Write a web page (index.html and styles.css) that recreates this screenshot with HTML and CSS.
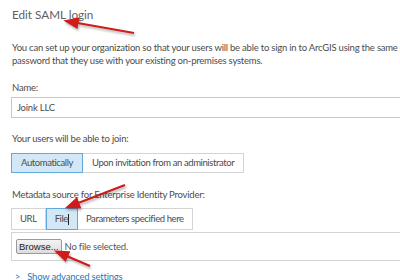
FILE: index.html
```html
<!DOCTYPE html>
<html>
<head>
  <link rel="stylesheet" href="styles.css">
</head>
<body>

  <div class="page">
    <h1 class="title">Edit SAML login</h1>

    <p class="intro">You can set up your organization so that your users will be able to sign in to ArcGIS using the same username and<br>password that they use with your existing on-premises systems.</p>

    <!-- Name -->
    <label class="label">Name:</label>
    <div class="text-input">Joink LLC</div>

    <!-- Join -->
    <label class="label join-label">Your users will be able to join:</label>
    <div class="btn-group">
      <div class="seg active">Automatically</div>
      <div class="seg">Upon invitation from an administrator</div>
    </div>

    <!-- Metadata -->
    <label class="label meta-label">Metadata source for Enterprise Identity Provider:</label>
    <div class="btn-group tabs">
      <div class="seg">URL</div>
      <div class="seg active">File<span class="cursor"></span></div>
      <div class="seg">Parameters specified here</div>
    </div>
    <div class="file-panel">
      <span class="browse">Browse...</span>
      <span class="no-file">No file selected.</span>
    </div>

    <div class="advanced"><span class="chev">&gt;</span> Show advanced settings</div>
  </div>

  <!-- annotation arrows -->
  <svg class="arrows" width="400" height="280" viewBox="0 0 400 280">
    <defs>
      <marker id="head" markerWidth="7" markerHeight="6" refX="3" refY="3" orient="auto" markerUnits="strokeWidth">
        <path d="M0,0.3 L7,3 L0,5.7 Z" fill="#d11a1a"/>
      </marker>
    </defs>
    <line x1="134" y1="33" x2="72" y2="22" stroke="#d11a1a" stroke-width="2.2" marker-end="url(#head)"/>
    <line x1="125" y1="185" x2="73" y2="205" stroke="#d11a1a" stroke-width="2.2" marker-end="url(#head)"/>
    <line x1="90" y1="266" x2="62" y2="254" stroke="#d11a1a" stroke-width="2.2" marker-end="url(#head)"/>
  </svg>

</body>
</html>
```

FILE: styles.css
```css
body {
  margin: 0;
  width: 400px;
  height: 280px;
  overflow: hidden;
  background: #fff;
  color: #4c4c4c;
  font-family: "Lato", "Noto Sans", sans-serif;
  position: relative;
}

.page {
  padding: 7px 0 0 12px;
  width: 520px;
  font-size: 9.5px;
  letter-spacing: -0.22px;
}

.title {
  margin: 0;
  font-size: 11.7px;
  font-weight: normal;
  color: #5e5e5e;
  line-height: 15px;
  letter-spacing: 0;
}

.intro {
  margin: 19px 0 0 0;
  line-height: 13px;
  width: 600px;
}

.label {
  display: block;
  line-height: 13px;
}

.intro + .label {
  margin-top: 14px;
}

.text-input {
  margin: 3px 0 0 -1px;
  height: 19px;
  border: 1px solid #c8c8c8;
  line-height: 19px;
  padding-left: 5px;
}

.join-label {
  margin-top: 14px;
}

.btn-group {
  display: flex;
  margin: 8px 0 0 -1px;
}

.seg {
  border: 1px solid #d4d4d4;
  height: 18px;
  line-height: 18px;
  padding: 0 9px;
  background: #fff;
  letter-spacing: -0.4px;
}

.seg + .seg {
  border-left: none;
}

.seg.active {
  background: #d3e8f7;
  border: 1px solid #62a8da;
}

.meta-label {
  margin-top: 15px;
}

.tabs {
  margin-top: 7px;
}

.tabs .seg {
  height: 20px;
  line-height: 20px;
  padding: 0 8px;
}

.cursor {
  display: inline-block;
  width: 1px;
  height: 11px;
  background: #222;
  vertical-align: middle;
}

.file-panel {
  margin: 2px 0 0 -1px;
  height: 27px;
  border: 1px solid #d4d4d4;
  display: flex;
  align-items: center;
  padding-left: 4px;
  gap: 3px;
}

.browse {
  border: 1px solid #9a9a9a;
  border-radius: 2px;
  background: linear-gradient(#f3f3f3, #dcdcdc);
  padding: 0 2px;
  line-height: 13px;
  color: #222;
  font-family: "Liberation Sans", sans-serif;
  letter-spacing: 0;
}

.no-file {
  color: #555;
}

.advanced {
  margin-top: 10px;
  padding-left: 3px;
  color: #2a7ab8;
}

.chev {
  margin-right: 5px;
  font-size: 9px;
}

.arrows {
  position: absolute;
  left: 0;
  top: 0;
  filter: drop-shadow(1px 2px 1px rgba(0, 0, 0, 0.3));
}
```
